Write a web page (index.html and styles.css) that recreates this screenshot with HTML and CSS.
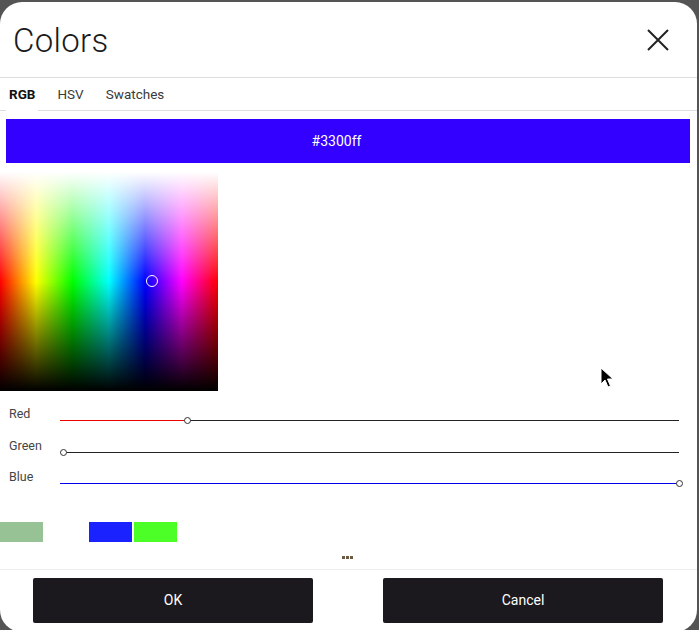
FILE: index.html
```html
<!DOCTYPE html>
<html>
<head>
<meta charset="utf-8">
<link rel="stylesheet" href="styles.css">
</head>
<body>
<div class="dialog">
  <header class="head">
    <h1 class="title">Colors</h1>
    <button class="close" aria-label="Close">
      <svg width="22" height="22" viewBox="0 0 22 22"><path d="M1 1 L21 21 M21 1 L1 21" stroke="#222" stroke-width="2" fill="none"/></svg>
    </button>
  </header>
  <nav class="tabs">
    <span class="tab active">RGB</span>
    <span class="tab">HSV</span>
    <span class="tab">Swatches</span>
  </nav>
  <div class="preview"><span>#3300ff</span></div>
  <div class="field-wrap">
    <div class="field">
      <span class="picker-dot"></span>
    </div>
    <svg class="cursor" width="14" height="22" viewBox="0 0 14 22"><path d="M1 1 L1 17 L5 13 L8 20 L10.5 19 L7.5 12 L13 12 Z" fill="#000" stroke="#fff" stroke-width="1"/></svg>
  </div>
  <div class="sliders">
    <div class="row">
      <span class="label">Red</span>
      <div class="track">
        <span class="fill red" style="width:127px"></span>
        <span class="thumb" style="left:127px"></span>
      </div>
    </div>
    <div class="row">
      <span class="label">Green</span>
      <div class="track">
        <span class="thumb" style="left:3px"></span>
      </div>
    </div>
    <div class="row">
      <span class="label">Blue</span>
      <div class="track">
        <span class="fill blue" style="width:619px"></span>
        <span class="thumb" style="left:619px"></span>
      </div>
    </div>
  </div>
  <div class="swatches">
    <span class="sw" style="background:#96c296"></span>
    <span class="sw sw-empty"></span>
    <span class="sw" style="background:#1a22ff"></span>
    <span class="sw" style="background:#4cff26"></span>
  </div>
  <div class="more"><i></i><i></i><i></i></div>
  <footer class="foot">
    <button class="btn">OK</button>
    <button class="btn">Cancel</button>
  </footer>
</div>
</body>
</html>
```
FILE: styles.css
```css
html, body {
  margin: 0;
  padding: 0;
  height: 630px;
  overflow: hidden;
  background: #545454;
}
.dialog {
  margin-top: 2px;
  width: 697px;
  height: 630px;
  background: #fff;
  border-radius: 22px;
  overflow: hidden;
  font-family: Roboto, "Liberation Sans", sans-serif;
  color: #222;
}
.head {
  height: 75px;
  display: flex;
  align-items: center;
  justify-content: space-between;
  padding: 0 19px 0 13px;
  border-bottom: 1px solid #ddd;
}
.title {
  margin: 2px 0 0;
  font-size: 33px;
  font-weight: 300;
  color: #1a1a1a;
  letter-spacing: 0.3px;
}
.close {
  width: 40px;
  height: 40px;
  border: 0;
  background: transparent;
  padding: 0;
  display: flex;
  align-items: center;
  justify-content: center;
}
.tabs {
  height: 32px;
  display: flex;
  align-items: center;
  gap: 16px;
  padding-left: 6px;
  border-bottom: 1px solid #ddd;
}
.tab {
  height: 32px;
  line-height: 32px;
  padding: 0 3px;
  font-size: 13.5px;
  color: #3a3a3a;
}
.tab.active {
  font-weight: 700;
  color: #111;
  height: 33px;
  margin-bottom: -1px;
  background: #fff;
}
.preview {
  margin: 8px 7px 0 6px;
  height: 44px;
  background: #3300ff;
  color: #fff;
  font-size: 14px;
  display: flex;
  align-items: center;
  justify-content: center;
  padding-right: 23px;
}
.field-wrap {
  position: relative;
  margin-top: 9px;
  height: 219px;
}
.field {
  position: relative;
  width: 218px;
  height: 219px;
  background:
    linear-gradient(to bottom, #fff 0%, rgba(255,255,255,0) 50%, rgba(0,0,0,0) 50%, #000 100%),
    linear-gradient(to right, #f00 0%, #ff0 16.6%, #0f0 33.3%, #0ff 50%, #00f 66.6%, #f0f 83.3%, #f00 100%);
}
.picker-dot {
  position: absolute;
  left: 146px;
  top: 103px;
  width: 10px;
  height: 10px;
  border: 1px solid #fff;
  border-radius: 50%;
}
.cursor {
  position: absolute;
  left: 600px;
  top: 195px;
}
.sliders {
  margin-top: 13px;
}
.row {
  height: 31.5px;
  display: grid;
  grid-template-columns: 60px 619px;
}
.label {
  padding-left: 9px;
  padding-top: 3px;
  font-size: 12.5px;
  line-height: 14px;
  color: #444;
}
.track {
  position: relative;
  height: 1px;
  margin-top: 16px;
  background: #222;
}
.fill {
  position: absolute;
  left: 0;
  top: 0;
  height: 1px;
}
.fill.red { background: #e00; }
.fill.blue { background: #00e; }
.thumb {
  position: absolute;
  top: -3px;
  width: 5px;
  height: 5px;
  margin-left: -3px;
  border: 1px solid #333;
  border-radius: 50%;
  background: #fff;
}
.swatches {
  margin-top: 23px;
  display: flex;
  gap: 2px;
  height: 20px;
}
.sw {
  width: 43px;
  height: 20px;
}
.sw-empty {
  width: 42px;
}
.more {
  margin-top: 14px;
  height: 3px;
  display: flex;
  gap: 1px;
  padding-left: 342px;
}
.more i {
  width: 3px;
  height: 3px;
  background: #6b5b43;
}
.foot {
  margin-top: 10px;
  border-top: 1px solid #eee;
  padding: 8px 34px 0 33px;
  display: flex;
  justify-content: space-between;
}
.btn {
  width: 280px;
  height: 45px;
  border: 0;
  border-radius: 2px;
  background: #1b191e;
  color: #fff;
  font-family: Roboto, "Liberation Sans", sans-serif;
  font-size: 14px;
}
```
